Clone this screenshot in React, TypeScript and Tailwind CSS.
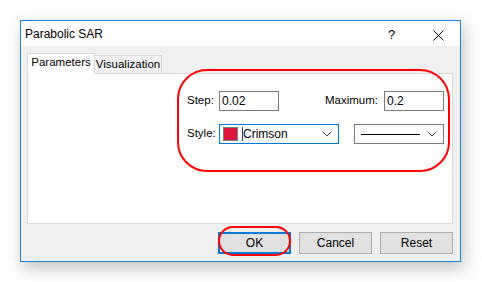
import React from 'react';

const font = { fontFamily: '"Liberation Sans", Arial, sans-serif' };

const Chevron = () => (
  <svg width="10" height="6" viewBox="0 0 10 6" className="shrink-0">
    <path d="M0.5 0.5 L5 5 L9.5 0.5" fill="none" stroke="#444" strokeWidth="1" />
  </svg>
);

const Field = ({ value, w }: { value: string; w: string }) => (
  <div className={`${w} h-[20px] border border-[#7a7a7a] bg-white flex items-center px-[2px] text-[12px] text-black`}>
    {value}
  </div>
);

export default function App() {
  return (
    <div className="w-[482px] h-[282px] bg-white pt-[20px] pl-[20px] overflow-hidden" style={font}>
      <div className="relative w-[441px] h-[242px] border border-[#1883d7] flex flex-col shadow-[3px_6px_16px_rgba(0,0,0,0.25)]">
        {/* title bar */}
        <div className="h-[25px] bg-white flex items-center pl-[4px] pr-[16px] text-[12px] text-black">
          <span className="flex-1 pt-[1px]">Parabolic SAR</span>
          <span className="w-[8px] text-[13px] mr-[37px] mt-[2px]">?</span>
          <svg width="11" height="11" viewBox="0 0 11 11" className="mt-[3px]">
            <path d="M0.5 0.5 L10.5 10.5 M10.5 0.5 L0.5 10.5" stroke="#111" strokeWidth="1" />
          </svg>
        </div>

        {/* client */}
        <div className="flex-1 bg-[#f0f0f0] pl-[6px] pt-[7px] text-[11.5px]">
          <div className="flex items-end h-[20px] text-black">
            <div className="h-[21px] w-[68px] bg-white border border-b-0 border-[#d9d9d9] flex items-center justify-center relative top-[1px] z-10 pb-[2px]">
              Parameters
            </div>
            <div className="h-[18px] w-[67px] bg-[#f0f0f0] border border-l-0 border-b-0 border-[#d9d9d9] flex items-center justify-center pt-[1px]">
              Visualization
            </div>
          </div>
          <div className="w-[426px] h-[151px] bg-white border border-[#d9d9d9] pt-[17px] pl-[159px] text-black">
            <div className="flex items-center h-[20px]">
              <span className="w-[32px]">Step:</span>
              <Field value="0.02" w="w-[60px]" />
              <span className="w-[105px] text-right pr-[6px]">Maximum:</span>
              <Field value="0.2" w="w-[60px]" />
            </div>
            <div className="flex items-center h-[20px] mt-[13px]">
              <span className="w-[32px]">Style:</span>
              <div className="w-[120px] h-[20px] border border-[#0078d7] flex items-center pl-[3px] pr-[6px]">
                <div className="w-[15px] h-[14px] bg-[#dc143c] border border-[#808080]" />
                <span className="ml-[4px] border-l border-[#1a3ea8] leading-[14px] flex-1 text-[12px]">Crimson</span>
                <Chevron />
              </div>
              <div className="ml-[15px] w-[90px] h-[20px] border border-[#7a7a7a] flex items-center pl-[6px] pr-[6px]">
                <div className="w-[59px] h-[1px] bg-black" />
                <div className="flex-1" />
                <Chevron />
              </div>
            </div>
          </div>

          <div className="flex justify-end gap-[8px] pr-[7px] mt-[8px] text-black text-[12px]">
            <button className="w-[73px] h-[22px] bg-[#e1e1e1] border-2 border-[#0078d7]">OK</button>
            <button className="w-[73px] h-[22px] bg-[#e1e1e1] border border-[#adadad]">Cancel</button>
            <button className="w-[73px] h-[22px] bg-[#e1e1e1] border border-[#adadad]">Reset</button>
          </div>
        </div>

        {/* red annotations */}
        <div className="absolute left-[156px] top-[48px] w-[273px] h-[103px] border-2 border-[#f00] rounded-[30px] pointer-events-none" />
        <div className="absolute left-[197px] top-[205px] w-[73px] h-[30px] border-2 border-[#f00] rounded-[15px] pointer-events-none" />
      </div>
    </div>
  );
}
